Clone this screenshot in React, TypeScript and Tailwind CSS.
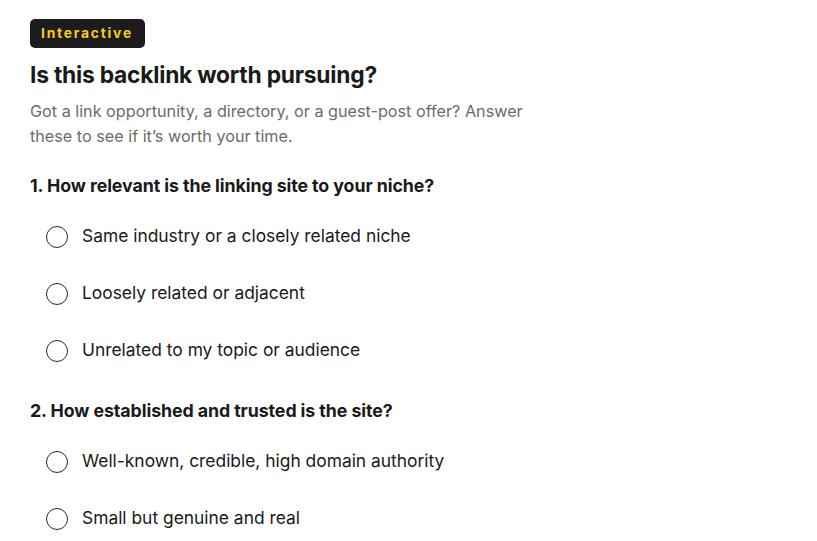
const questions = [
  {
    title: '1. How relevant is the linking site to your niche?',
    options: [
      'Same industry or a closely related niche',
      'Loosely related or adjacent',
      'Unrelated to my topic or audience',
    ],
  },
  {
    title: '2. How established and trusted is the site?',
    options: [
      'Well-known, credible, high domain authority',
      'Small but genuine and real',
    ],
  },
];

export default function App() {
  return (
    <div className="min-h-screen bg-white px-[30px] pt-[19px] font-['Inter',sans-serif] text-[#1a1a1a]">
      <span className="inline-flex h-[29px] items-center rounded-[5px] bg-[#1c1c1c] pr-[12px] pl-[11px] text-[13.8px] font-bold tracking-[0.13em] text-[#facc15]">
        Interactive
      </span>

      <h1 className="mt-[13px] text-[22.8px] leading-[28px] font-bold tracking-[-0.01em]">
        Is this backlink worth pursuing?
      </h1>
      <p className="mt-[10px] max-w-[500px] text-[16.2px] leading-[25px] text-[#6b6b6b]">
        Got a link opportunity, a directory, or a guest-post offer? Answer
        these to see if it’s worth your time.
      </p>

      <div className="mt-[25px] flex flex-col gap-[20px]">
        {questions.map((q) => (
          <div key={q.title}>
            <h2 className="text-[17.8px] leading-[24px] font-bold tracking-[-0.005em]">
              {q.title}
            </h2>
            <div className="mt-[10px] flex flex-col">
              {q.options.map((o) => (
                <label
                  key={o}
                  className="flex h-[57px] cursor-pointer items-center gap-[14px] pl-[16px] text-[17.4px]"
                >
                  <span className="h-[22px] w-[22px] shrink-0 rounded-full border-[1.5px] border-[#2a2a2a] bg-white" />
                  <span>{o}</span>
                </label>
              ))}
            </div>
          </div>
        ))}
      </div>
    </div>
  );
}
